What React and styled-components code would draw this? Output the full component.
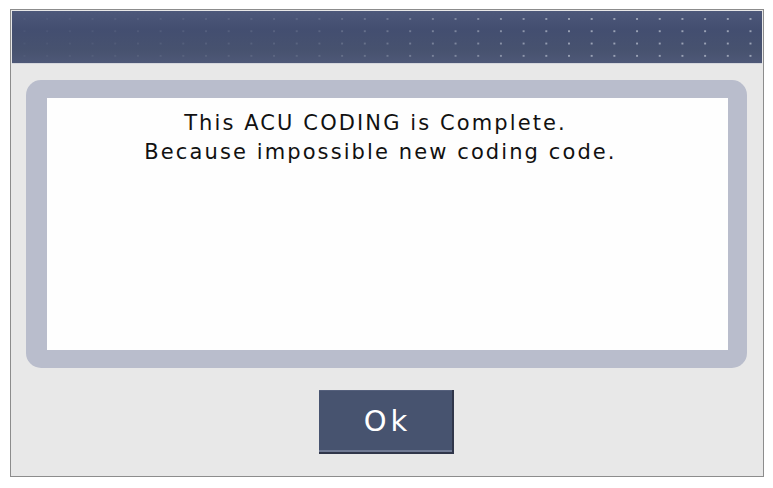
import React from "react"
import styled, { createGlobalStyle } from "styled-components"

const GlobalStyle = createGlobalStyle`
  html, body {
    margin: 0;
    padding: 0;
    background: #ffffff;
  }
  body {
    font-family: "DejaVu Sans", "Liberation Sans", sans-serif;
  }
`

const Page = styled.div`
  padding: 9px 9px 0 10px;
  width: 773px;
  box-sizing: border-box;
`

const Frame = styled.div`
  position: relative;
  width: 754px;
  height: 468px;
  box-sizing: border-box;
  border: 1px solid #8c8c8c;
  padding: 1px;
  background: #e8e8e8;
  display: flex;
  flex-direction: column;
  align-items: stretch;
  &::after {
    content: "";
    position: absolute;
    left: 0;
    bottom: -2px;
    width: 40px;
    height: 1px;
    background: #a9a6d0;
  }
`

const Header = styled.div`
  position: relative;
  height: 52px;
  flex-shrink: 0;
  background: linear-gradient(to bottom, #4d587a 0%, #434e70 35%, #47526f 75%, #4e5877 100%);
  border-bottom: 1px solid #d4d6dc;
  &::after {
    content: "";
    position: absolute;
    inset: 0;
    background-image: radial-gradient(circle at 1px 1px, #9aa2b5 0.9px, transparent 1.4px);
    background-size: 22.7px 12.3px;
    background-position: 11.5px 7px;
    -webkit-mask-image: linear-gradient(to right, rgba(0,0,0,0.08) 0%, rgba(0,0,0,0.25) 40%, #000 75%);
    mask-image: linear-gradient(to right, rgba(0,0,0,0.08) 0%, rgba(0,0,0,0.25) 40%, #000 75%);
  }
`

const Body = styled.div`
  flex: 1;
  display: flex;
  flex-direction: column;
  align-items: center;
  padding: 16px 15px 0 14px;
`

const Panel = styled.div`
  align-self: stretch;
  height: 288px;
  box-sizing: border-box;
  background: #b9bdcc;
  border-radius: 15px;
  padding: 18px 19px 18px 21px;
  display: flex;
`

const MessageBox = styled.div`
  flex: 1;
  background: #fefefe;
  padding-top: 11px;
  text-align: center;
  color: #111;
  font-size: 21px;
  line-height: 29px;
  letter-spacing: 2.1px;
`

const Line = styled.div`
  margin-left: ${p => p.shift || 0}px;
`

const OkButton = styled.button`
  margin-top: 22px;
  width: 135px;
  height: 64px;
  box-sizing: border-box;
  background: #47536f;
  border: none;
  border-right: 2px solid #30364a;
  border-bottom: 2px solid #30364a;
  box-shadow: inset 0 -2px 0 #707a94, inset 0 1px 0 #55607c;
  color: #ffffff;
  font-family: "DejaVu Sans", "Liberation Sans", sans-serif;
  font-size: 29px;
  letter-spacing: 4px;
  padding: 0 0 0 4px;
  cursor: pointer;
`

export default function App() {
  return (
    <>
      <GlobalStyle />
      <Page>
        <Frame>
          <Header />
          <Body>
            <Panel>
              <MessageBox>
                <Line shift={-24}>This ACU CODING is Complete.</Line>
                <Line shift={-14}>Because impossible new coding code.</Line>
              </MessageBox>
            </Panel>
            <OkButton>Ok</OkButton>
          </Body>
        </Frame>
      </Page>
    </>
  )
}
